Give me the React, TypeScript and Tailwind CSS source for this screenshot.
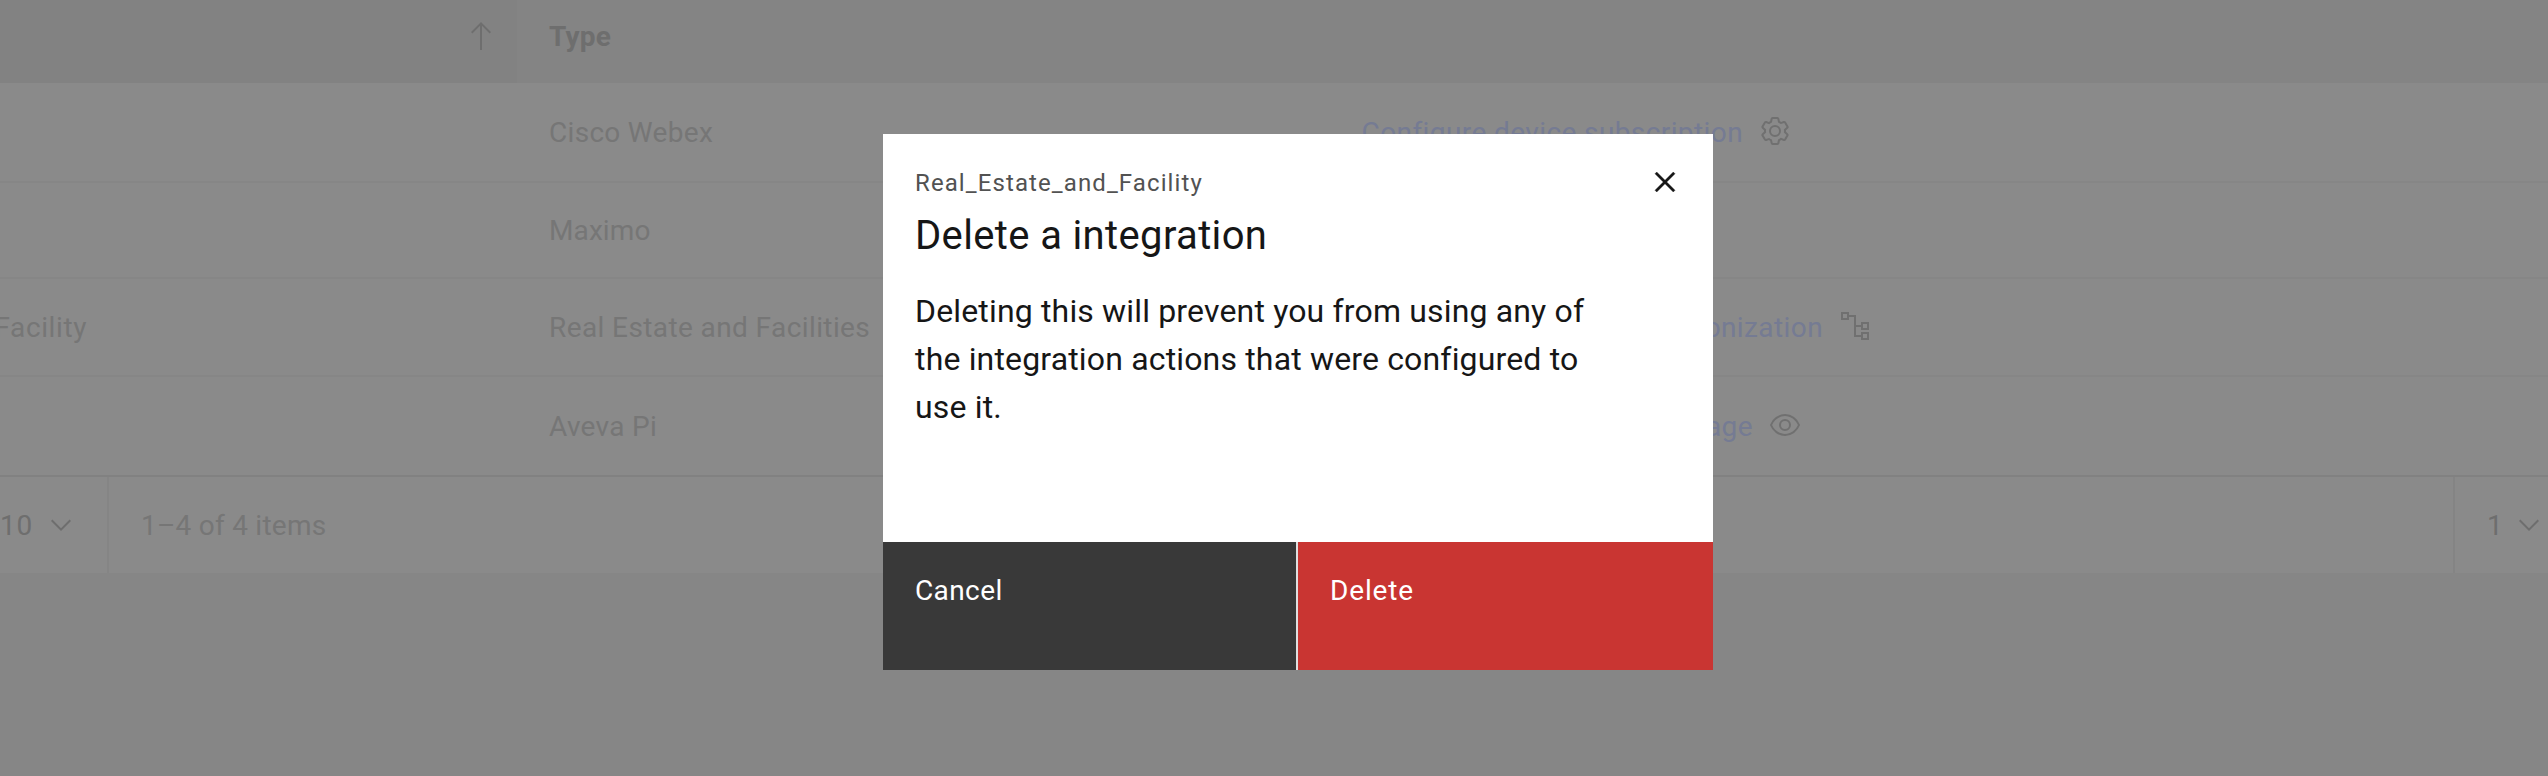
import React from "react";

type IconProps = { className?: string };

const SettingsIcon = ({ className }: IconProps) => (
  <svg viewBox="0 0 32 32" width="32" height="32" fill="currentColor" className={className}>
    <path d="M27 16.76V15.23l1.92-1.68A2 2 0 0 0 29.3 11L26.94 7a2 2 0 0 0-1.73-1 2 2 0 0 0-.64.1l-2.43.82a11.35 11.35 0 0 0-1.31-.75l-.51-2.52a2 2 0 0 0-2-1.61H13.64a2 2 0 0 0-2 1.61l-.51 2.52a11.48 11.48 0 0 0-1.32.75L7.43 6.06A2 2 0 0 0 6.79 6 2 2 0 0 0 5.06 7L2.7 11a2 2 0 0 0 .41 2.51L5 15.24v1.53L3.11 18.45A2 2 0 0 0 2.7 21L5.06 25a2 2 0 0 0 1.73 1 2 2 0 0 0 .64-.1l2.43-.82a11.35 11.35 0 0 0 1.31.75l.51 2.52a2 2 0 0 0 2 1.61h4.72a2 2 0 0 0 2-1.61l.51-2.52a11.48 11.48 0 0 0 1.32-.75l2.42.82a2 2 0 0 0 .64.1 2 2 0 0 0 1.73-1L29.3 21a2 2 0 0 0-.41-2.51ZM25.21 24l-3.43-1.16a8.86 8.86 0 0 1-2.71 1.57L18.36 28H13.64l-.71-3.55a9.36 9.36 0 0 1-2.7-1.57L6.79 24 4.43 20l2.72-2.4a8.9 8.9 0 0 1 0-3.13L4.43 12 6.79 8l3.43 1.16a8.86 8.86 0 0 1 2.71-1.57L13.64 4h4.72l.71 3.55a9.36 9.36 0 0 1 2.7 1.57L25.21 8 27.57 12l-2.72 2.4a8.9 8.9 0 0 1 0 3.13L27.57 20Z" />
    <circle cx="16" cy="16" r="5" fill="none" stroke="currentColor" strokeWidth="2" />
  </svg>
);

const TreeIcon = ({ className }: IconProps) => (
  <svg viewBox="0 0 32 32" width="32" height="32" fill="none" stroke="currentColor" strokeWidth="2" className={className}>
    <rect x="3" y="3" width="6" height="6" />
    <rect x="23" y="13" width="6" height="6" />
    <rect x="23" y="23" width="6" height="6" />
    <path d="M9 6h7v20h6M16 16h6" />
  </svg>
);

const ViewIcon = ({ className }: IconProps) => (
  <svg viewBox="0 0 32 32" width="32" height="32" fill="currentColor" className={className}>
    <path d="M30.94,15.66A16.69,16.69,0,0,0,16,5,16.69,16.69,0,0,0,1.06,15.66a1,1,0,0,0,0,.68A16.69,16.69,0,0,0,16,27,16.69,16.69,0,0,0,30.94,16.34,1,1,0,0,0,30.94,15.66ZM16,25c-5.3,0-10.9-3.93-12.93-9C5.1,10.93,10.7,7,16,7s10.9,3.93,12.93,9C26.9,21.07,21.3,25,16,25Z" />
    <circle cx="16" cy="16" r="5" fill="none" stroke="currentColor" strokeWidth="2" />
  </svg>
);

const ChevronIcon = ({ className }: IconProps) => (
  <svg viewBox="0 0 32 32" width="32" height="32" fill="currentColor" className={className}>
    <path d="M16 22 6 12l1.4-1.4 8.6 8.6 8.6-8.6L26 12z" />
  </svg>
);

const ArrowUpIcon = ({ className }: IconProps) => (
  <svg viewBox="0 0 32 32" width="32" height="32" fill="currentColor" className={className}>
    <path d="M16 2 6 12l1.4 1.4L15 5.8V30h2V5.8l7.6 7.6L26 12z" />
  </svg>
);

const CloseIcon = ({ className }: IconProps) => (
  <svg viewBox="0 0 32 32" width="40" height="40" fill="currentColor" stroke="currentColor" strokeWidth="0.3" className={className}>
    <path d="M24 9.4 22.6 8 16 14.6 9.4 8 8 9.4l6.6 6.6L8 22.6 9.4 24l6.6-6.6 6.6 6.6 1.4-1.4-6.6-6.6L24 9.4z" />
  </svg>
);

type Row = {
  height: string;
  name?: string;
  type: string;
  typeSpacing: string;
  action?: { label: string; width: string; Icon: (p: IconProps) => React.ReactElement };
};

const rows: Row[] = [
  {
    height: "h-[100px]",
    type: "Cisco Webex",
    typeSpacing: "tracking-[0.3px]",
    action: { label: "Configure device subscription", width: "w-[379px]", Icon: SettingsIcon },
  },
  { height: "h-[96px]", type: "Maximo", typeSpacing: "tracking-[0.1px]" },
  {
    height: "h-[98px]",
    name: "Real Estate and Facility",
    type: "Real Estate and Facilities",
    typeSpacing: "tracking-[0.4px]",
    action: { label: "synchronization", width: "w-[459px]", Icon: TreeIcon },
  },
  {
    height: "h-[98px]",
    type: "Aveva Pi",
    typeSpacing: "tracking-[0.3px]",
    action: { label: "View message usage", width: "w-[389px]", Icon: ViewIcon },
  },
];

function IntegrationTable() {
  return (
    <div className="text-[28px] leading-9 text-[#767676]">
      <div className="flex h-[83px] bg-[#848484] text-[#6e6e6e]">
        <div className="flex w-[517px] shrink-0 justify-end bg-[#828282] pt-5 pr-5">
          <ArrowUpIcon />
        </div>
        <div className="pt-[19px] pl-8 font-bold tracking-[0.2px]">Type</div>
      </div>
      {rows.map(({ height, name, type, typeSpacing, action }, i) => (
        <div
          key={type}
          className={`flex items-center bg-[#8a8a8a] pt-0.5 ${height} ${i < rows.length - 1 ? "border-b-2 border-[#868686]" : ""}`}
        >
          <div className="flex w-[517px] shrink-0 justify-start">
            <div className="flex w-[87px] justify-end whitespace-nowrap tracking-[0.6px]">{name}</div>
          </div>
          <div className={`w-[815px] shrink-0 pl-8 whitespace-nowrap ${typeSpacing}`}>{type}</div>
          {action && (
            <div className="flex items-center gap-4 pl-8">
              <div className={`flex justify-end whitespace-nowrap tracking-[0.4px] text-[#757b93] ${action.width}`}>
                {action.label}
              </div>
              <action.Icon className="mb-1 text-[#707070]" />
            </div>
          )}
        </div>
      ))}
    </div>
  );
}

function Pagination() {
  return (
    <div className="flex h-[98px] items-stretch justify-between border-t-2 border-[#818181] bg-[#8a8a8a] text-[28px] leading-9 text-[#767676]">
      <div className="flex">
        <div className="flex w-[109px] items-center gap-3 border-r-2 border-[#858585] text-[#6e6e6e]">
          <span className="pt-0.5 tracking-[0.8px]">10</span>
          <ChevronIcon />
        </div>
        <div className="flex items-center pt-0.5 pl-8 tracking-[0.25px]">1–4 of 4 items</div>
      </div>
      <div className="flex w-[95px] items-center gap-[10px] border-l-2 border-[#848484] pl-8 text-[#6e6e6e]">
        <span className="pt-0.5">1</span>
        <ChevronIcon className="shrink-0" />
      </div>
    </div>
  );
}

function DeleteDialog() {
  return (
    <div className="absolute top-[134px] left-[883px] flex h-[536px] w-[830px] flex-col bg-white text-[#161616]">
      <div className="flex grow flex-col px-8 pt-8">
        <div className="flex h-8 items-center justify-between">
          <p className="pt-0.5 text-2xl leading-8 tracking-[1.1px] text-[#525252]">Real_Estate_and_Facility</p>
          <button aria-label="Close" className="-mr-1">
            <CloseIcon />
          </button>
        </div>
        <h2 className="mt-3 text-[40px] leading-[52px] tracking-[0.36px]">Delete a integration</h2>
        <p className="mt-[25px] text-[32px] leading-12 tracking-[0.16px]">
          Deleting this will prevent you from using any of
          <br />
          the integration actions that were configured to
          <br />
          use it.
        </p>
      </div>
      <div className="flex h-32 shrink-0 gap-0.5 bg-[#e0e0e0] text-[28px] leading-9 text-white">
        <button className="flex w-[413px] items-start bg-[#393939] px-8 pt-[31px] tracking-[0.4px]">Cancel</button>
        <button className="flex grow items-start bg-[#c93532] px-8 pt-[31px] tracking-[0.85px]">Delete</button>
      </div>
    </div>
  );
}

export default function App() {
  return (
    <div className="relative h-[776px] w-full overflow-hidden bg-[#868686] font-['Roboto',sans-serif]">
      <IntegrationTable />
      <Pagination />
      <DeleteDialog />
    </div>
  );
}
